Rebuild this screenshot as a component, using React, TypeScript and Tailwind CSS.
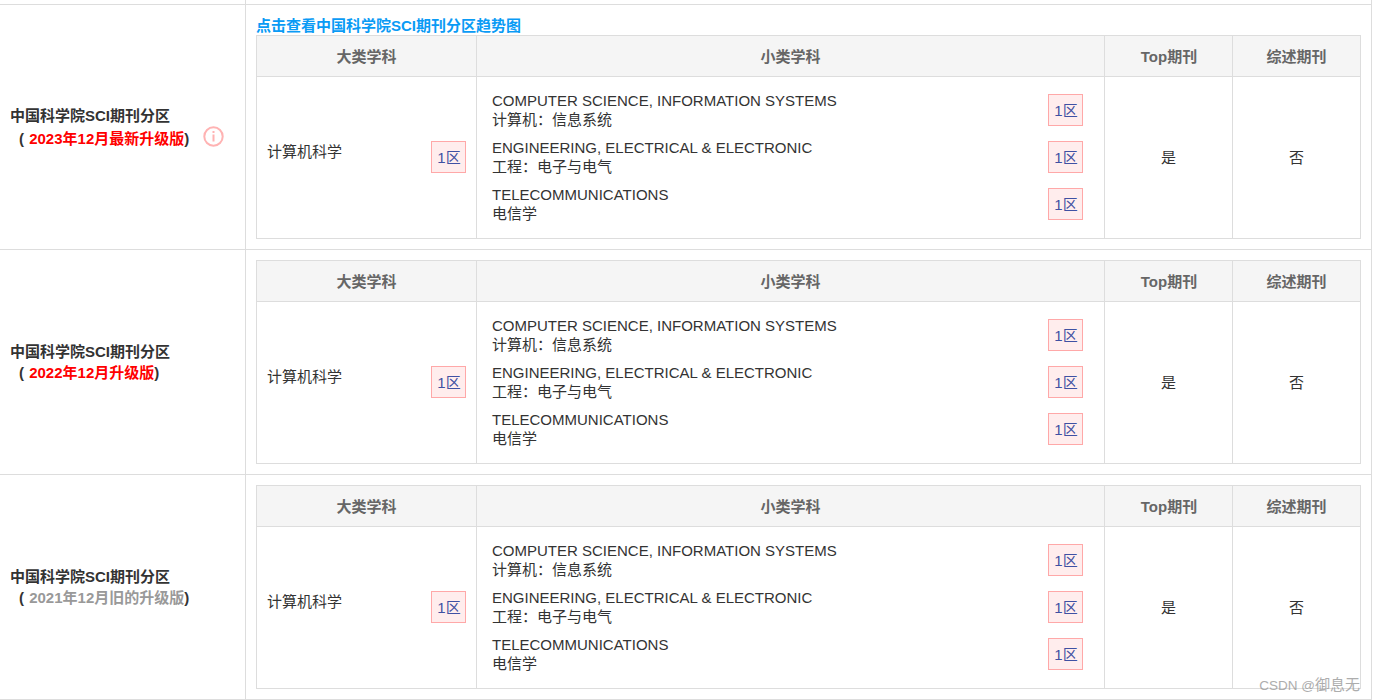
import React from 'react';

const font = "font-['Liberation_Sans','Noto_Sans_CJK_SC',sans-serif]";

const subjects = [
  { en: 'COMPUTER SCIENCE, INFORMATION SYSTEMS', zh: '计算机：信息系统' },
  { en: 'ENGINEERING, ELECTRICAL & ELECTRONIC', zh: '工程：电子与电气' },
  { en: 'TELECOMMUNICATIONS', zh: '电信学' },
];

function Badge() {
  return (
    <span className="flex h-[32px] w-[35px] shrink-0 items-center justify-center border border-[#ffa8a8] bg-[#ffeded] pl-px pt-[3px] text-[15px] text-[#3f51a3]">
      1区
    </span>
  );
}

function InfoIcon() {
  return (
    <svg className="absolute left-[193px] top-[-3px] h-[21px] w-[21px]" viewBox="0 0 21 21" fill="none">
      <circle cx="10.5" cy="10.5" r="9.2" stroke="#ffb3b3" strokeWidth="2" />
      <rect x="9.5" y="5" width="2" height="2" fill="#ffb3b3" />
      <rect x="9.5" y="8.5" width="2" height="7" fill="#ffb3b3" />
    </svg>
  );
}

function PartitionTable() {
  return (
    <div className="flex h-[204px] flex-col border border-[#ddd] text-[15px] text-[#333]">
      <div className="flex h-[41px] shrink-0 items-center border-b border-[#ddd] bg-[#f5f5f5] font-bold text-[#666]">
        <div className="flex h-full w-[220px] items-center justify-center border-r border-[#ddd] pt-[2px]">大类学科</div>
        <div className="flex h-full w-[628px] items-center justify-center border-r border-[#ddd] pt-[2px]">小类学科</div>
        <div className="flex h-full w-[128px] items-center justify-center border-r border-[#ddd] pl-px pt-[2px]">Top期刊</div>
        <div className="flex h-full flex-1 items-center justify-center pt-[2px]">综述期刊</div>
      </div>
      <div className="flex flex-1">
        <div className="flex w-[220px] items-center justify-between border-r border-[#ddd] pb-px pl-[10px] pr-[10px]">
          <span className="pb-[9px]">计算机科学</span>
          <Badge />
        </div>
        <div className="flex w-[628px] flex-col justify-center border-r border-[#ddd] pb-px pl-[15px] pr-[21px]">
          {subjects.map((s) => (
            <div key={s.en} className="flex h-[47px] items-center justify-between">
              <div className="leading-[19px]">
                <div>{s.en}</div>
                <div>{s.zh}</div>
              </div>
              <Badge />
            </div>
          ))}
        </div>
        <div className="flex w-[128px] items-center justify-center border-r border-[#ddd] pt-[2px]">是</div>
        <div className="flex flex-1 items-center justify-center pt-[2px]">否</div>
      </div>
    </div>
  );
}

function Row({ version, color, link, info }: { version: string; color: string; link?: boolean; info?: boolean }) {
  return (
    <div className={`flex border-b border-[#ddd] ${link ? 'h-[245px]' : 'h-[225px]'}`}>
      <div className="flex w-[246px] shrink-0 flex-col justify-center border-r border-[#ddd] pl-[10px] text-[15px] font-bold text-[#333]">
        <div className="leading-[20px]">中国科学院SCI期刊分区</div>
        <div className={`relative whitespace-nowrap pl-[9px] ${info ? 'mt-[3px]' : 'mt-px'} leading-[20px]`}>
          ( <span className={`ml-px ${color}`}>{version}</span>)
          {info && <InfoIcon />}
        </div>
      </div>
      <div className="flex-1 pl-[10px] pr-[10px]">
        {link ? (
          <div className="flex h-[30px] items-end pb-px text-[15px] font-bold leading-[17px] text-[#0a9bf5]">
            点击查看中国科学院SCI期刊分区趋势图
          </div>
        ) : (
          <div className="h-[10px]" />
        )}
        <PartitionTable />
      </div>
    </div>
  );
}

export default function App() {
  return (
    <div className={`relative h-[700px] w-[1375px] overflow-hidden bg-white ${font}`}>
      <div className="w-[1372px] border-r border-[#ddd]">
        <div className="h-[5px] border-b border-[#ddd]">
          <div className="h-full w-[246px] border-r border-[#ddd]" />
        </div>
        <Row version="2023年12月最新升级版" color="text-[#ff0000]" link info />
        <Row version="2022年12月升级版" color="text-[#ff0000]" />
        <Row version="2021年12月旧的升级版" color="text-[#999]" />
      </div>
      <span className="absolute bottom-[4px] right-[15px] text-[15px] text-[#999] opacity-80">
        <span className="text-[13.5px]">CSDN @</span>御息无
      </span>
    </div>
  );
}
